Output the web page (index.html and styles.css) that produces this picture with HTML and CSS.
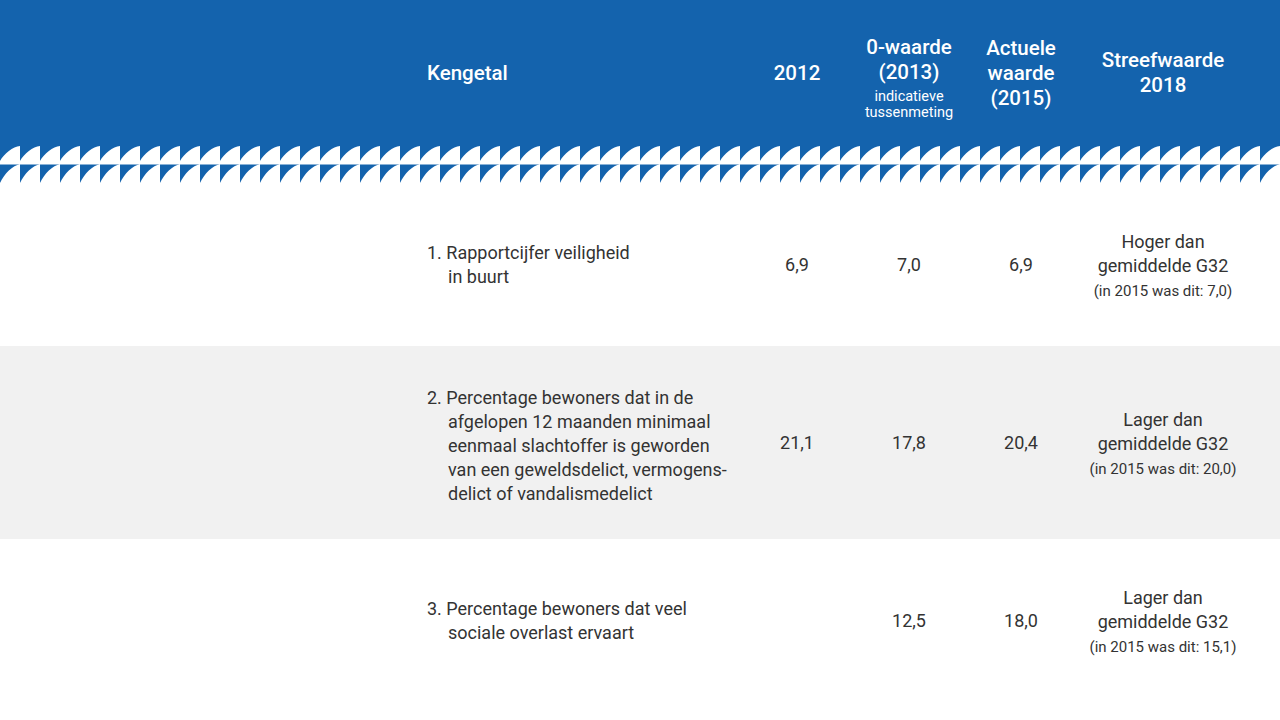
FILE: index.html
```html
<!DOCTYPE html>
<html lang="nl">
<head>
<meta charset="utf-8">
<title>Kengetallen veiligheid</title>
<link rel="stylesheet" href="styles.css">
</head>
<body>
<div class="page">
  <header class="head">
    <div class="grid">
      <div class="hk">Kengetal</div>
      <div class="hc">2012</div>
      <div class="hc zero">
        <div>0-waarde<br>(2013)</div>
        <div class="note">indicatieve<br>tussenmeting</div>
      </div>
      <div class="hc">Actuele<br>waarde<br>(2015)</div>
      <div class="hc">Streefwaarde<br>2018</div>
    </div>
  </header>
  <svg class="teeth" width="1280" height="37" viewBox="0 0 1280 37" preserveAspectRatio="none">
    <defs>
      <pattern id="saw" width="20" height="37" patternUnits="userSpaceOnUse">
        <path d="M0 0H20C13 0.5 4 8 0 15Z" fill="#1463ad"/>
        <path d="M0 18.5H20C13 19 4 28 0 37Z" fill="#1463ad"/>
      </pattern>
    </defs>
    <rect x="0" y="0" width="1280" height="37" fill="url(#saw)"/>
  </svg>
  <section class="row r1">
    <div class="grid">
      <div class="k">1. Rapportcijfer veiligheid<br>in buurt</div>
      <div class="v">6,9</div>
      <div class="v">7,0</div>
      <div class="v">6,9</div>
      <div class="s">Hoger dan<br>gemiddelde G32<span class="small">(in 2015 was dit: 7,0)</span></div>
    </div>
  </section>
  <section class="row r2">
    <div class="grid">
      <div class="k">2. Percentage bewoners dat in de<br>afgelopen 12 maanden minimaal<br>eenmaal slachtoffer is geworden<br>van een geweldsdelict, vermogens-<br>delict of vandalismedelict</div>
      <div class="v">21,1</div>
      <div class="v">17,8</div>
      <div class="v">20,4</div>
      <div class="s">Lager dan<br>gemiddelde G32<span class="small">(in 2015 was dit: 20,0)</span></div>
    </div>
  </section>
  <section class="row r3">
    <div class="grid">
      <div class="k">3. Percentage bewoners dat veel<br>sociale overlast ervaart</div>
      <div class="v"></div>
      <div class="v">12,5</div>
      <div class="v">18,0</div>
      <div class="s">Lager dan<br>gemiddelde G32<span class="small">(in 2015 was dit: 15,1)</span></div>
    </div>
  </section>
</div>
</body>
</html>
```

FILE: styles.css
```css
html, body {
  margin: 0;
  padding: 0;
  background: #ffffff;
}

body {
  font-family: Roboto, "Open Sans", "Liberation Sans", sans-serif;
  color: #333333;
  width: 1280px;
  height: 720px;
  overflow: hidden;
}

.page {
  width: 1280px;
}

.grid {
  display: grid;
  grid-template-columns: 314px 112px 112px 112px 172px;
  padding-left: 427px;
  align-items: center;
}

.head {
  background: #1463ad;
  height: 146px;
  display: flex;
  align-items: center;
  color: #ffffff;
}

.head .grid {
  width: 100%;
}

.hk, .hc {
  font-size: 20.5px;
  font-weight: 500;
  line-height: 25px;
}

.hc {
  text-align: center;
  white-space: nowrap;
}

.zero {
  margin-bottom: -10px;
}

.note {
  font-size: 14.5px;
  font-weight: 400;
  line-height: 16px;
  margin-top: 4px;
}

.teeth {
  display: block;
  width: 1280px;
  height: 37px;
}

.row {
  display: flex;
  align-items: center;
}

.row .grid {
  width: 100%;
}

.r1 {
  height: 163px;
}

.r2 {
  height: 193px;
  background: #f1f1f1;
}

.r3 {
  height: 164px;
}

.k {
  font-size: 18px;
  line-height: 24px;
  padding-left: 21px;
  text-indent: -21px;
  white-space: nowrap;
}

.r2 .k {
  padding-top: 7px;
}

.v {
  font-size: 18px;
  line-height: 24px;
  text-align: center;
}

.s {
  font-size: 18px;
  line-height: 24px;
  text-align: center;
  padding-top: 4px;
  white-space: nowrap;
}

.small {
  display: block;
  font-size: 15px;
  line-height: 26px;
}
```
